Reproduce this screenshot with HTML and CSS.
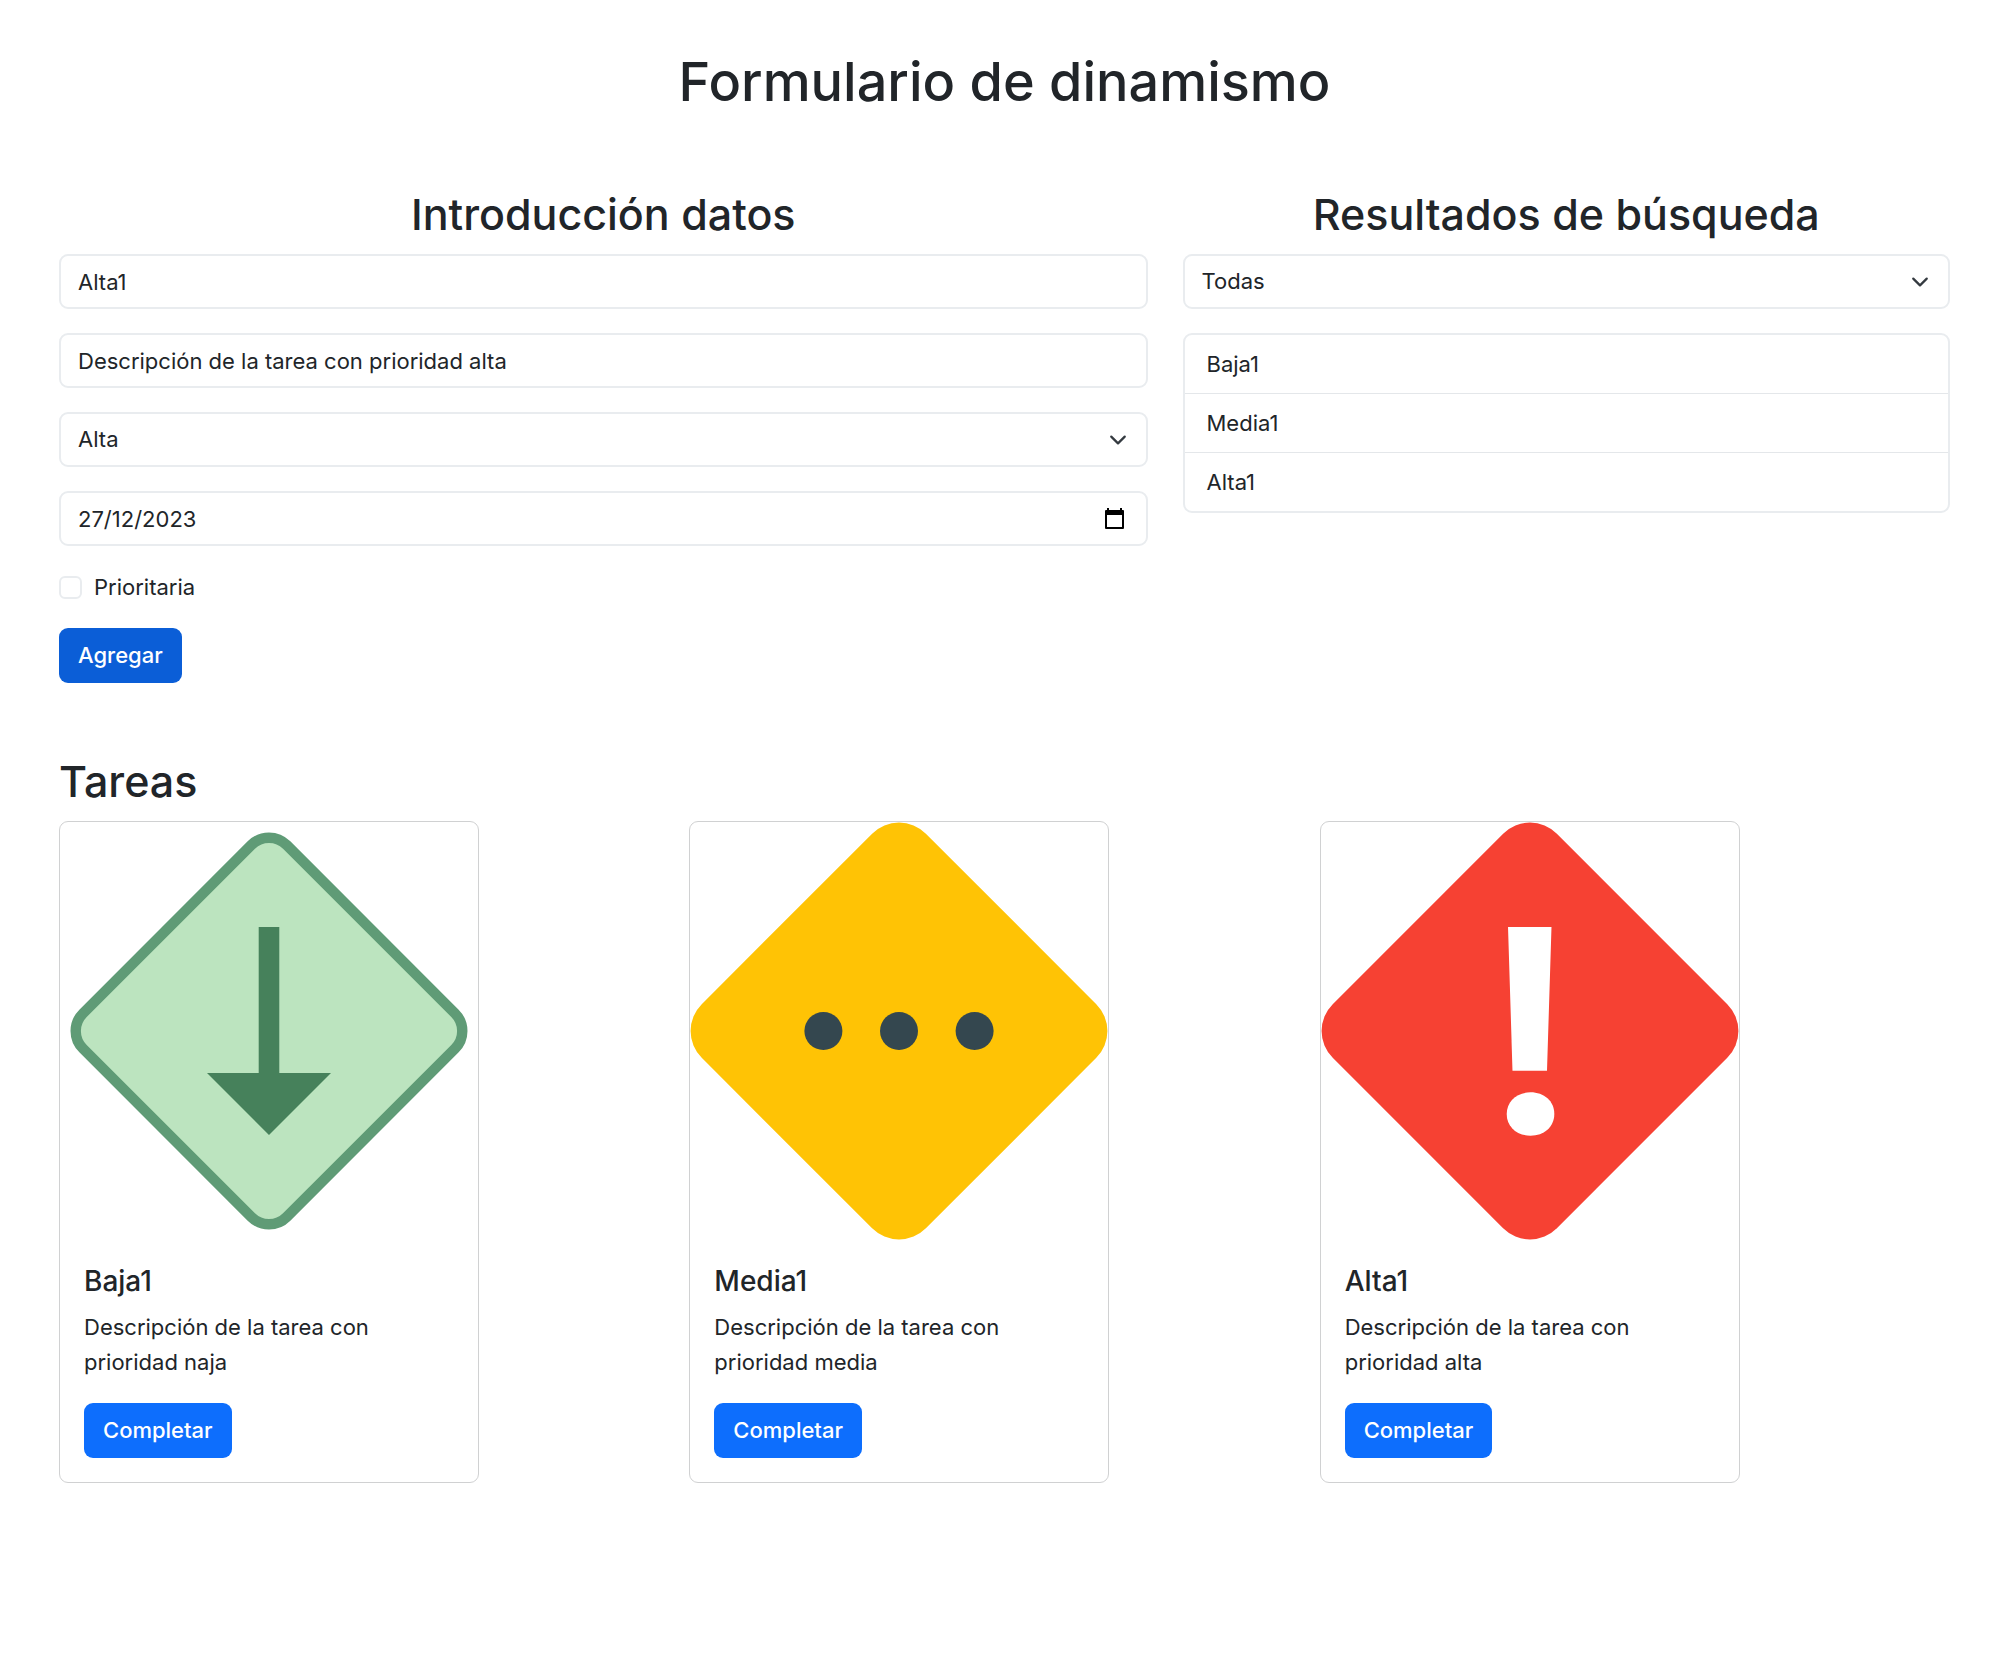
FILE: index.html
```html
<!DOCTYPE html>
<html lang="es">
<head>
  <meta charset="utf-8">
  <meta name="viewport" content="width=device-width, initial-scale=1">
  <title>Formulario de dinamismo</title>
  <link rel="stylesheet" href="styles.css">
</head>
<body>
  <main class="page">
    <h1 class="page-title">Formulario de dinamismo</h1>

    <div class="panels">
      <section class="panel panel-form">
        <h2 class="heading heading-center">Introducción datos</h2>
        <form class="task-form">
          <input class="control" type="text" aria-label="Nombre" value="Alta1">
          <input class="control" type="text" aria-label="Descripción" value="Descripción de la tarea con prioridad alta">
          <select class="control select" aria-label="Prioridad">
            <option>Baja</option>
            <option>Media</option>
            <option selected>Alta</option>
          </select>
          <div class="date-field">
            <input class="control" type="text" inputmode="numeric" aria-label="Fecha" value="27/12/2023">
            <button class="date-button" type="button" aria-label="Abrir calendario">
              <svg class="date-icon" viewBox="0 0 19 21" aria-hidden="true">
                <path d="M2 0h2v2h11V0h2v2h1a1 1 0 0 1 1 1v17a1 1 0 0 1-1 1H1a1 1 0 0 1-1-1V3a1 1 0 0 1 1-1h1zM2 7v12h15V7z" fill="#000" fill-rule="evenodd"/>
              </svg>
            </button>
          </div>
          <div class="check">
            <input class="check-box" type="checkbox" id="prioritaria">
            <label for="prioritaria">Prioritaria</label>
          </div>
          <button class="button button-active" type="submit">Agregar</button>
        </form>
      </section>

      <section class="panel panel-results">
        <h2 class="heading heading-center">Resultados de búsqueda</h2>
        <select class="control select" aria-label="Filtro">
          <option selected>Todas</option>
          <option>Baja</option>
          <option>Media</option>
          <option>Alta</option>
        </select>
        <ul class="results">
          <li class="result">Baja1</li>
          <li class="result">Media1</li>
          <li class="result">Alta1</li>
        </ul>
      </section>
    </div>

    <section class="tasks">
      <h2 class="heading">Tareas</h2>
      <div class="task-grid">
        <article class="card">
          <svg class="card-image" viewBox="-209 -209 418 418" aria-hidden="true">
            <rect x="-144" y="-144" width="288" height="288" rx="25" transform="rotate(45)" fill="#bce4bf" stroke="#5f9b76" stroke-width="10.4"/>
            <path d="M-10.3-104h20.6V42H62L0 104-62 42h51.700z" fill="#46815b"/>
          </svg>
          <div class="card-body">
            <h5 class="card-title">Baja1</h5>
            <p class="card-text">Descripción de la tarea con prioridad naja</p>
            <button class="button" type="button">Completar</button>
          </div>
        </article>
        <article class="card">
          <svg class="card-image" viewBox="-209 -209 418 418" aria-hidden="true">
            <rect x="-158.500" y="-158.500" width="317" height="317" rx="38" transform="rotate(45)" fill="#ffc305"/>
            <g fill="#34474f">
              <circle cx="-75.600" r="19"/>
              <circle r="19"/>
              <circle cx="75.600" r="19"/>
            </g>
          </svg>
          <div class="card-body">
            <h5 class="card-title">Media1</h5>
            <p class="card-text">Descripción de la tarea con prioridad media</p>
            <button class="button" type="button">Completar</button>
          </div>
        </article>
        <article class="card">
          <svg class="card-image" viewBox="-209 -209 418 418" aria-hidden="true">
            <rect x="-158.500" y="-158.500" width="317" height="317" rx="38" transform="rotate(45)" fill="#f64133"/>
            <path d="M-22-104h43.500L17 39.700h-34.500z" fill="#fff"/>
            <path d="M-23.300 83C-23.300 70-13 61.300.5 61.300S24.300 70 24.300 83 14 104.700.5 104.700-23.300 96-23.300 83z" fill="#fff"/>
          </svg>
          <div class="card-body">
            <h5 class="card-title">Alta1</h5>
            <p class="card-text">Descripción de la tarea con prioridad alta</p>
            <button class="button" type="button">Completar</button>
          </div>
        </article>
      </div>
    </section>
  </main>
</body>
</html>
```
FILE: styles.css
```css
*,
*::before,
*::after {
  box-sizing: border-box;
}

body {
  margin: 0;
  background: #fff;
  color: #212529;
  font-family: Inter, "Liberation Sans", sans-serif;
  font-size: 22px;
  line-height: 35px;
}

.page {
  padding: 47px 50px 70px 59px;
}

.page-title {
  margin: 0 0 69px;
  font-size: 54px;
  font-weight: 500;
  line-height: 70px;
  text-align: center;
}

.heading {
  margin: 0 0 12px;
  font-size: 43px;
  font-weight: 500;
  line-height: 56px;
}

.heading-center {
  text-align: center;
}

.panels {
  display: grid;
  grid-template-columns: repeat(12, 1fr);
  column-gap: 35px;
}

.panel-form {
  grid-column: span 7;
}

.panel-results {
  grid-column: span 5;
}

.task-form {
  display: flex;
  flex-direction: column;
  align-items: flex-start;
  gap: 24px;
}

.control {
  display: block;
  width: 100%;
  height: 55px;
  margin: 0;
  padding: 0 17px;
  border: 2px solid #e9ecef;
  border-radius: 9px;
  background-color: #fff;
  color: inherit;
  font: inherit;
}

.select {
  appearance: none;
  padding-right: 52px;
  background-image: url("data:image/svg+xml,%3Csvg xmlns='http://www.w3.org/2000/svg' viewBox='0 0 16 16'%3E%3Cpath fill='none' stroke='%23343a40' stroke-linecap='round' stroke-linejoin='round' stroke-width='2' d='m2 5 6 6 6-6'/%3E%3C/svg%3E");
  background-repeat: no-repeat;
  background-position: right 19px center;
  background-size: 18px 18px;
}

.date-field {
  position: relative;
  width: 100%;
}

.date-button {
  position: absolute;
  top: 0;
  right: 19px;
  display: flex;
  align-items: center;
  height: 100%;
  padding: 0 5px;
  border: 0;
  background: none;
}

.date-icon {
  width: 19px;
  height: 21px;
}

.check {
  display: flex;
  align-items: center;
  gap: 12px;
  height: 34px;
}

.check-box {
  appearance: none;
  width: 23px;
  height: 23px;
  margin: 0;
  border: 2px solid #e9ecef;
  border-radius: 6px;
  background: #fff;
}

.button {
  height: 55px;
  padding: 0 19px;
  border: 0;
  border-radius: 9px;
  background: #0d6efd;
  color: #fff;
  font: inherit;
  font-weight: 500;
}

.button-active {
  background: #0b5ed7;
}

.results {
  margin: 24px 0 0;
  padding: 0;
  border: 2px solid #e9ecef;
  border-radius: 9px;
  list-style: none;
}

.result {
  padding: 12px 22px 11px;
}

.result + .result {
  border-top: 1px solid #e4e7ea;
}

.tasks {
  margin-top: 70px;
}

.task-grid {
  display: grid;
  grid-template-columns: repeat(3, 1fr);
}

.card {
  width: 420px;
  max-width: 100%;
  border: 1px solid #d0d1d2;
  border-radius: 9px;
}

.card-image {
  display: block;
  width: 100%;
}

.card-body {
  padding: 24px;
}

.card-title {
  margin: 0 0 11px;
  font-size: 28px;
  font-weight: 500;
  line-height: 35px;
}

.card-text {
  margin: 0 0 23px;
}
```
